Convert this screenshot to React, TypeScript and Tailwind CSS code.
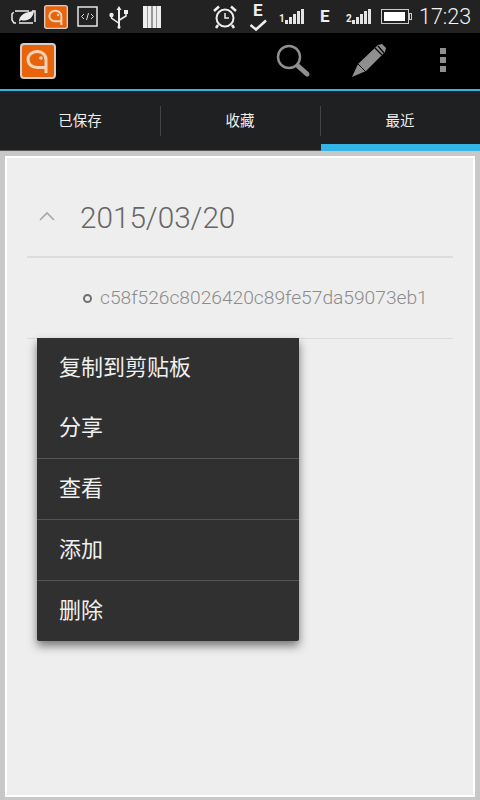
const cjk = "font-['Roboto','Noto_Sans_CJK_SC',sans-serif]";

const tabs = [
  { label: "已保存", active: false },
  { label: "收藏", active: false },
  { label: "最近", active: true },
];

const menuItems = [
  { label: "复制到剪贴板", line: false },
  { label: "分享", line: false },
  { label: "查看", line: true },
  { label: "添加", line: true },
  { label: "删除", line: true },
];

function AppLogo({ size }: { size: number }) {
  return (
    <svg width={size} height={size} viewBox="0 0 36 36">
      <rect x="1" y="1" width="34" height="34" rx="3" fill="#e8640c" stroke="#d8d0c8" strokeWidth="2" />
      <path d="M26 30 V17 A9 8 0 1 0 17 24.500 H26" fill="none" stroke="#f6d2b4" strokeWidth="3" />
      <circle cx="21" cy="15" r="1.800" fill="#f6d2b4" />
    </svg>
  );
}

function Signal({ n }: { n: string }) {
  return (
    <div className="flex items-end w-[25px] h-[15px] justify-between">
      <span className="text-[10px] leading-[10px] font-bold text-[#eee] w-[5px] font-['Roboto',sans-serif]">{n}</span>
      {[4, 7, 10, 13, 15].map((h) => (
        <div key={h} className="w-[3px] bg-[#e4e4e4]" style={{ height: h }} />
      ))}
    </div>
  );
}

function StatusBar() {
  return (
    <div className="h-[33px] bg-[#222222] flex items-center text-[#eee] shrink-0 relative">
      {/* left notification icons */}
      <svg width="26" height="16" viewBox="0 0 26 16" className="ml-[11px]">
        <path d="M4 2 H24 V14 H3 L1 11 V5 Z" fill="none" stroke="#eee" strokeWidth="1.500" strokeDasharray="14 3" />
        <path d="M8 13 C8 6 14 3 23 2 C22 9 17 13 10 11 Z" fill="#eee" />
      </svg>
      <div className="ml-[7px]">
        <AppLogo size={24} />
      </div>
      <svg width="21" height="21" viewBox="0 0 21 21" className="ml-[9px]">
        <rect x="1" y="1" width="19" height="19" fill="none" stroke="#e6e6e6" strokeWidth="1.500" />
        <path d="M7 8 L4.500 10.500 L7 13 M14 8 L16.500 10.500 L14 13 M11.500 7 L9.500 14" fill="none" stroke="#ddd" strokeWidth="1" />
      </svg>
      <svg width="20" height="24" viewBox="0 0 20 24" className="ml-[11px]">
        <path d="M10 1 L7.500 5 H9 V21 A1.500 1.500 0 1 0 11 21 V5 H12.500 Z" fill="#eee" />
        <circle cx="2.500" cy="10" r="2.200" fill="#eee" />
        <rect x="15" y="5" width="4" height="4" fill="#eee" />
        <path d="M2.500 11 V13 L9.500 18 M17 8 V11 L10.500 15" fill="none" stroke="#eee" strokeWidth="1.500" />
      </svg>
      <div className="ml-[14px] flex h-[22px] w-[18px] bg-[#999] justify-between">
        {[0, 1, 2, 3].map((i) => (
          <div key={i} className="w-[3.500px] bg-[#eee]" />
        ))}
      </div>

      {/* right side */}
      <svg width="24" height="24" viewBox="0 0 24 24" className="ml-[52px]">
        <circle cx="12" cy="13" r="8.500" fill="none" stroke="#eee" strokeWidth="2" />
        <path d="M12 8 V13 H16" fill="none" stroke="#eee" strokeWidth="1.500" />
        <path d="M1 6 L6 1.500 M23 6 L18 1.500 M5 20 L3 23 M19 20 L21 23" stroke="#eee" strokeWidth="2.500" fill="none" />
      </svg>
      <div className="ml-[12px] w-[19px] h-[28px] relative">
        <span className="absolute left-[4px] top-[-1px] text-[17px] leading-[16px] font-bold font-['Roboto',sans-serif]">E</span>
        <svg width="19" height="13" viewBox="0 0 19 13" className="absolute left-0 top-[16px]">
          <path d="M1.500 6 L7 10.500 L17 1.500" fill="none" stroke="#eee" strokeWidth="2.500" />
        </svg>
      </div>
      <div className="ml-[11px] mt-[-1px]">
        <Signal n="1" />
      </div>
      <span className="ml-[16px] w-[10px] text-[17px] font-bold font-['Roboto',sans-serif] leading-none">E</span>
      <div className="ml-[16px] mt-[-1px]">
        <Signal n="2" />
      </div>
      <div className="ml-[10px] w-[28px] h-[15px] border border-[#ccc] p-[2px] relative">
        <div className="w-[21px] h-full bg-white" />
        <div className="absolute right-[-4px] top-[3px] w-[3px] h-[7px] border border-[#ccc]" />
      </div>
      <span className="ml-[10px] text-[21.500px] leading-none font-light font-['Roboto',sans-serif] text-[#f4f4f4]">17:23</span>
    </div>
  );
}

function ActionBar() {
  return (
    <div className="h-[58px] bg-black border-b-2 border-[#33b5e5] flex items-center shrink-0">
      <div className="ml-[20px] mb-[1px]">
        <AppLogo size={36} />
      </div>
      <svg width="36" height="36" viewBox="0 0 36 36" className="ml-[219px]">
        <circle cx="14" cy="14" r="11" fill="none" stroke="#8f8f8f" strokeWidth="2.500" />
        <path d="M23 23 L32 31" stroke="#8f8f8f" strokeWidth="5" strokeLinecap="round" />
      </svg>
      <svg width="36" height="36" viewBox="0 0 36 36" className="ml-[40px]">
        <path d="M1 34 L7 21 L27 2 L31 1 L35 5 L34 9 L15 28 Z" fill="#8f8f8f" />
        <path d="M24 5 L31 12 M27 3 L33 10" stroke="#000" strokeWidth="1.200" fill="none" />
        <path d="M7 21 L15 29" stroke="#000" strokeWidth="1" fill="none" />
      </svg>
      <div className="ml-[53px] flex flex-col gap-[3px] mt-[-2px]">
        <div className="w-[6px] h-[6px] bg-[#8f8f8f]" />
        <div className="w-[6px] h-[6px] bg-[#8f8f8f]" />
        <div className="w-[6px] h-[6px] bg-[#8f8f8f]" />
      </div>
    </div>
  );
}

function Tabs() {
  return (
    <div className="h-[60px] bg-[#1f2021] flex shrink-0 border-b border-[#555]">
      {tabs.map((t, i) => (
        <div key={t.label} className="flex-1 relative flex items-center justify-center">
          {i > 0 && <div className="absolute left-0 top-[15px] h-[30px] w-px bg-[#444]" />}
          <span className={`${cjk} text-[14.500px] text-[#eee] mt-[2px]`}>{t.label}</span>
          {t.active && <div className="absolute left-[1px] right-0 bottom-[-1px] h-[7px] bg-[#33b5e5]" />}
        </div>
      ))}
    </div>
  );
}

export default function App() {
  return (
    <div className={`w-[480px] h-[800px] flex flex-col overflow-hidden relative ${cjk}`}>
      <StatusBar />
      <ActionBar />
      <Tabs />

      {/* card */}
      <div className="flex-1 bg-[#c8c8c8] pt-[5px] px-[5px] pb-[3px]">
        <div className="h-full bg-[#eeeeee] border-2 border-white px-[20px]">
          <div className="h-[100px] flex items-center border-b-2 border-[#dcdcdc] pt-[42px] pb-[20px]">
            <svg width="18" height="10" viewBox="0 0 18 10" className="ml-[11px] mb-[4px]">
              <path d="M2 9 L9 2 L16 9" fill="none" stroke="#a8a8a8" strokeWidth="1.600" />
            </svg>
            <span className="ml-[24px] text-[29.700px] font-light text-[#666666] leading-none font-['Roboto',sans-serif]">2015/03/20</span>
          </div>
          <div className="h-[81px] flex items-center border-b border-[#dcdcdc] pl-[56px]">
            <div className="w-[9px] h-[9px] rounded-full border-2 border-[#707070]" />
            <span className="ml-[8px] text-[19.200px] font-light text-[#8c8c8c] leading-none font-['Roboto',sans-serif]">
              c58f526c8026420c89fe57da59073eb1
            </span>
          </div>
        </div>
      </div>

      {/* long-press context menu */}
      <div className="absolute left-[37px] top-[338px] w-[262px] h-[303px] bg-[#303030] rounded-b-[2px] shadow-[0_5px_10px_rgba(0,0,0,0.5)] flex flex-col">
        {menuItems.map((item, i) => (
          <div
            key={item.label}
            className={`flex items-center pl-[22px] ${i === 0 ? "h-[59px]" : "h-[61px]"} ${item.line ? "border-t border-[#555]" : ""}`}
          >
            <span className={`${cjk} text-[22px] leading-none text-[#f0f0f0]`}>{item.label}</span>
          </div>
        ))}
      </div>
    </div>
  );
}
